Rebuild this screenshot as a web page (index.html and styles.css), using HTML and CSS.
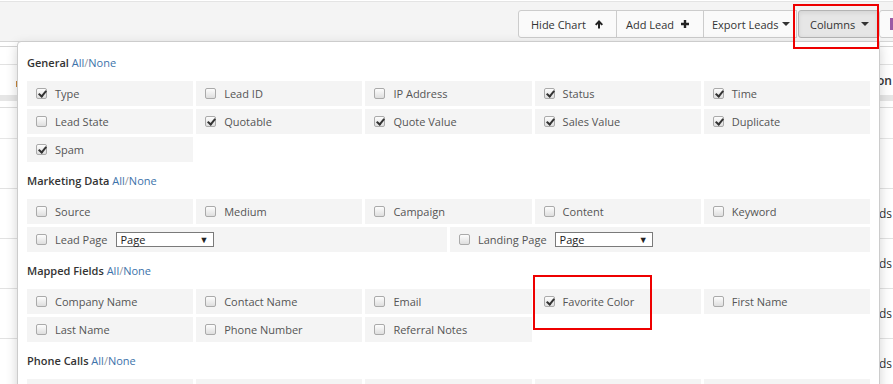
FILE: index.html
```html
<!DOCTYPE html>
<html lang="en">
<head>
    <meta charset="UTF-8">
    <title>Leads</title>
    <link rel="stylesheet" href="styles.css">
</head>
<body>
<div class="topbar">
    <div class="toolbar">
        <div class="btn-group">
            <button class="btn btn-chart">Hide Chart
                <svg class="ico" viewBox="0 0 10 10"><path d="M5 1 L9 5.2 L7.6 6.5 L6 4.9 V9.5 H4 V4.9 L2.4 6.5 L1 5.2 Z"/></svg>
            </button>
            <button class="btn btn-add">Add Lead
                <svg class="ico" viewBox="0 0 10 10"><path d="M3.8 1 H6.2 V3.8 H9 V6.2 H6.2 V9 H3.8 V6.2 H1 V3.8 H3.8 Z"/></svg>
            </button>
            <button class="btn btn-export">Export Leads <span class="caret"></span></button>
        </div>
        <div class="btn-group">
            <button class="btn active">Columns <span class="caret"></span></button>
        </div>
        <div class="btn-group">
            <button class="btn more"><span class="more-ico"></span></button>
        </div>
    </div>
</div>

<div class="table">
    <div class="trow thin"></div>
    <div class="trow filter"></div>
    <div class="trow head"><span class="sort"></span><span>Action</span></div>
    <div class="trow band"></div>
    <div class="trow totals"></div>
    <div class="trow spacer"></div>
    <div class="trow data"></div>
    <div class="trow data"><span>Leads</span></div>
    <div class="trow data"><span>Leads</span></div>
    <div class="trow data"><span>Leads</span></div>
    <div class="trow data"><span>Leads</span></div>
</div>

<div class="columns-menu">
    <h4 class="group-title">General <span class="links"><a>All</a>/<a>None</a></span></h4>
    <div class="field-grid">
        <label class="field"><span class="check on"></span>Type</label>
        <label class="field"><span class="check"></span>Lead ID</label>
        <label class="field"><span class="check"></span>IP Address</label>
        <label class="field"><span class="check on"></span>Status</label>
        <label class="field"><span class="check on"></span>Time</label>
        <label class="field"><span class="check"></span>Lead State</label>
        <label class="field"><span class="check on"></span>Quotable</label>
        <label class="field"><span class="check on"></span>Quote Value</label>
        <label class="field"><span class="check on"></span>Sales Value</label>
        <label class="field"><span class="check on"></span>Duplicate</label>
        <label class="field"><span class="check on"></span>Spam</label>
    </div>

    <h4 class="group-title">Marketing Data <span class="links"><a>All</a>/<a>None</a></span></h4>
    <div class="field-grid">
        <label class="field"><span class="check"></span>Source</label>
        <label class="field"><span class="check"></span>Medium</label>
        <label class="field"><span class="check"></span>Campaign</label>
        <label class="field"><span class="check"></span>Content</label>
        <label class="field"><span class="check"></span>Keyword</label>
    </div>
    <div class="field-grid halves">
        <label class="field"><span class="check"></span>Lead Page <span class="select">Page</span></label>
        <label class="field"><span class="check"></span>Landing Page <span class="select">Page</span></label>
    </div>

    <h4 class="group-title">Mapped Fields <span class="links"><a>All</a>/<a>None</a></span></h4>
    <div class="field-grid">
        <label class="field"><span class="check"></span>Company Name</label>
        <label class="field"><span class="check"></span>Contact Name</label>
        <label class="field"><span class="check"></span>Email</label>
        <label class="field"><span class="check on"></span>Favorite Color</label>
        <label class="field"><span class="check"></span>First Name</label>
        <label class="field"><span class="check"></span>Last Name</label>
        <label class="field"><span class="check"></span>Phone Number</label>
        <label class="field"><span class="check"></span>Referral Notes</label>
    </div>

    <h4 class="group-title">Phone Calls <span class="links"><a>All</a>/<a>None</a></span></h4>
    <div class="field-grid">
        <div class="field"></div>
        <div class="field"></div>
        <div class="field"></div>
        <div class="field"></div>
        <div class="field"></div>
    </div>
</div>

<div class="mark mark-columns"></div>
<div class="mark mark-field"></div>
</body>
</html>
```

FILE: styles.css
```css
html * {
    box-sizing: border-box;
}

body {
    margin: 0;
    color: #555;
    font-family: "Open Sans", "Liberation Sans", sans-serif;
    font-size: 11px;
    background: #fff;
    overflow: hidden;
    height: 384px;
    position: relative;
}

.topbar {
    margin-top: 1px;
    height: 41px;
    background: #f4f4f4;
    border-top: 1px solid #e4e4e4;
    border-bottom: 1px solid #d6d6d6;
}

.toolbar {
    display: flex;
    justify-content: flex-end;
    padding: 8px 0 0;
    margin-right: -40px;
}

.btn-group {
    display: flex;
    margin-left: 2px;
}

.btn {
    display: flex;
    align-items: center;
    justify-content: space-between;
    height: 28px;
    padding: 0 12px;
    font: inherit;
    font-size: 11px;
    color: #333;
    background: #fafafa;
    border: 1px solid #ccc;
    margin-left: -1px;
}

.btn-group .btn:first-child {
    border-radius: 3px 0 0 3px;
}

.btn-chart { width: 99px; }
.btn-add { width: 88px; padding: 0 13px 0 9px; }
.btn-export { width: 94px; padding: 0 6px 0 8px; }

.btn.active {
    background: #e6e6e6;
    border-color: #b4b4b4;
    box-shadow: inset 0 2px 4px rgba(0, 0, 0, 0.08);
    padding: 0 8px 0 11px;
    width: 80px;
}

.btn.more {
    width: 54px;
    justify-content: flex-start;
    padding-left: 10px;
}

.more-ico {
    width: 3px;
    height: 12px;
    background: #9b5ba5;
}

.ico {
    width: 10px;
    height: 10px;
    fill: #222;
}

.caret {
    width: 0;
    height: 0;
    border-left: 4px solid transparent;
    border-right: 4px solid transparent;
    border-top: 4px solid #333;
}

/* table behind the menu */
.table {
    display: flex;
    flex-direction: column;
    font-size: 12px;
}

.trow {
    display: flex;
    justify-content: flex-end;
    align-items: center;
    border-bottom: 1px solid #e2e2e2;
    color: #333;
    padding-right: 1px;
    position: relative;
}

.trow.thin { height: 5px; border-bottom-color: #d4d4d4; }
.trow.filter { height: 18px; }
.trow.head { height: 30px; font-weight: 600; border-bottom: 0; }
.trow.band { height: 6px; background: #e6e6e6; border-bottom: 0; }
.trow.totals { height: 7px; border-bottom-color: #ddd; }
.trow.spacer { height: 31px; border-bottom-color: #e6e6e6; }
.trow.data { height: 50px; }

.sort {
    position: absolute;
    left: 16px;
    top: 16px;
    width: 3px;
    height: 6px;
    background: #c8873a;
}

/* dropdown menu */
.columns-menu {
    position: absolute;
    left: 17px;
    top: 41px;
    width: 863px;
    height: 400px;
    background: #fff;
    border: 1px solid #ccc;
    border-radius: 4px 0 0 0;
    box-shadow: 0 4px 12px rgba(0, 0, 0, 0.18);
    padding: 12px 9px 0;
}

.group-title {
    margin: 10px 0 9px;
    line-height: 18px;
    font-size: 11px;
    font-weight: 600;
    color: #333;
}

.group-title:first-child {
    margin-top: 0;
}

.links {
    font-weight: 400;
    color: #999;
}

.links a {
    color: #3d72aa;
}

.field-grid {
    display: grid;
    grid-template-columns: repeat(5, 1fr);
    gap: 3px;
}

.field-grid + .field-grid {
    margin-top: 3px;
}

.field-grid.halves {
    grid-template-columns: repeat(2, 1fr);
}

.field {
    display: flex;
    align-items: center;
    height: 25px;
    padding-left: 9px;
    background: #f4f4f4;
    color: #555;
    white-space: nowrap;
}

.check {
    position: relative;
    width: 11px;
    height: 11px;
    margin-right: 8px;
    border: 1px solid #aaa;
    border-radius: 2px;
    background: linear-gradient(#fdfdfd, #dedede);
}

.check.on::after {
    content: "";
    position: absolute;
    left: 3px;
    top: 0;
    width: 3px;
    height: 6px;
    border-right: 2px solid #333;
    border-bottom: 2px solid #333;
    transform: rotate(40deg);
}

.select {
    position: relative;
    width: 98px;
    height: 15px;
    margin-left: 8px;
    padding-left: 4px;
    line-height: 13px;
    background: #fff;
    border: 1px solid #7a7a7a;
    color: #222;
}

.select::after {
    content: "▼";
    position: absolute;
    right: 4px;
    top: 0;
    font-size: 9px;
    color: #222;
}

/* annotation boxes */
.mark {
    position: absolute;
    border: 2px solid #ee0000;
}

.mark-columns {
    left: 793px;
    top: 4px;
    width: 86px;
    height: 45px;
}

.mark-field {
    left: 533px;
    top: 275px;
    width: 119px;
    height: 55px;
}
```
